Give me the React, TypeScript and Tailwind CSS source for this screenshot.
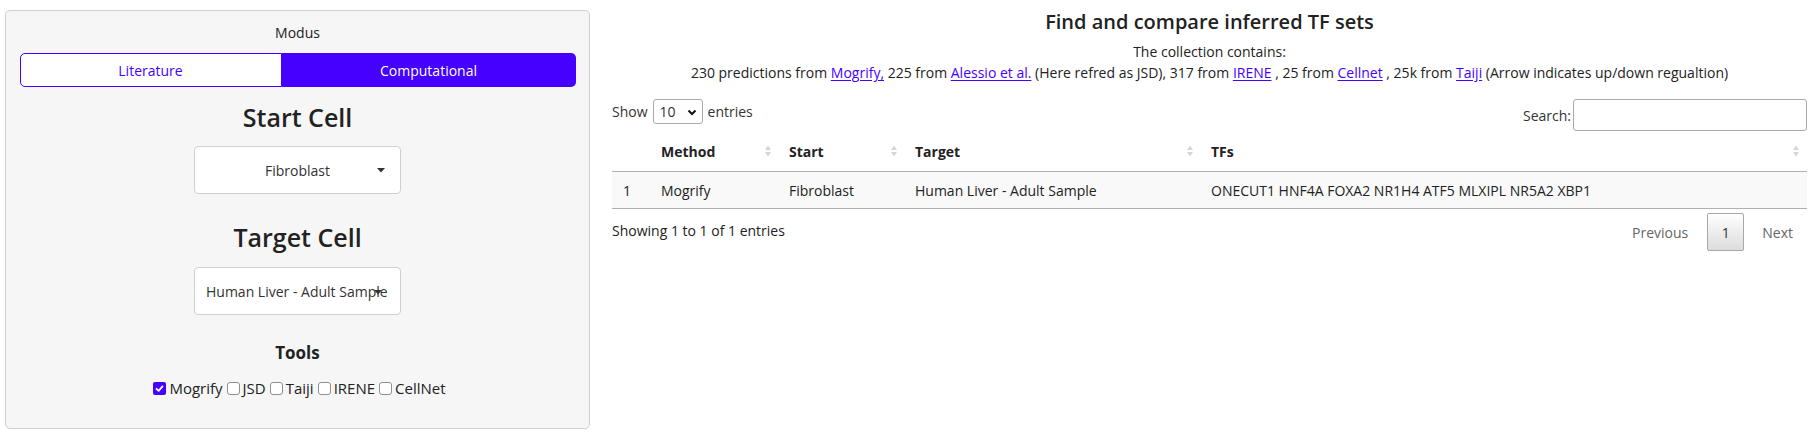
import React from "react";

function SortArrows() {
  return (
    <svg width="8" height="14" viewBox="0 0 8 14" className="absolute right-[7px] top-1/2 -translate-y-1/2">
      <polygon points="1,6 4,1.5 7,6" fill="#d6d6d6" />
      <polygon points="1,8 4,12.5 7,8" fill="#d6d6d6" />
    </svg>
  );
}

function Check({ checked, label }: { checked?: boolean; label: string }) {
  return (
    <span className="flex items-center">
      {checked ? (
        <span className="ml-[4px] mr-[3px] w-[13px] h-[13px] rounded-[2px] bg-[#4600ff] flex items-center justify-center">
          <svg width="9" height="9" viewBox="0 0 9 9">
            <path d="M1.5 4.8 L3.6 6.8 L7.5 2.4" stroke="white" strokeWidth="1.8" fill="none" strokeLinecap="round" strokeLinejoin="round" />
          </svg>
        </span>
      ) : (
        <span className="ml-[4px] mr-[3px] w-[13px] h-[13px] rounded-[3px] bg-white border border-[#8f8f8f]" />
      )}
      <span>{label}</span>
    </span>
  );
}

function A({ children }: { children: React.ReactNode }) {
  return <a className="text-[#4600ff] underline underline-offset-2">{children}</a>;
}

export default function App() {
  return (
    <div
      className="flex items-start pl-[5px] w-[1818px] h-[436px] bg-white text-[#333] text-[14px]"
      style={{ fontFamily: '"Open Sans", "Liberation Sans", sans-serif' }}
    >
      {/* Left panel */}
      <div className="mt-[10px] w-[585px] h-[419px] border border-[#cfcfcf] rounded-[5px] bg-[#f6f6f6] flex flex-col items-center">
        <div className="mt-[12px] leading-[20px] text-[#222]">Modus</div>
        <div className="mt-[10px] w-[556px] h-[34px] flex">
          <div className="w-[262px] h-full border border-[#4600ff] rounded-l-[5px] bg-white text-[#4600ff] flex items-center justify-center">
            Literature
          </div>
          <div className="flex-1 h-full rounded-r-[5px] bg-[#4600ff] text-white flex items-center justify-center">
            Computational
          </div>
        </div>
        <div className="mt-[13px] leading-[34px] text-[25px] font-semibold text-[#222]">Start Cell</div>
        <div className="relative mt-[12px] w-[207px] h-[48px] bg-white border border-[#cfcfcf] rounded-[4px] flex items-center justify-center text-[#333]">
          <span>Fibroblast</span>
          <svg width="8" height="5" viewBox="0 0 8 5" className="absolute right-[15px] top-[21px]">
            <polygon points="0,0 8,0 4,4.5" fill="#333" />
          </svg>
        </div>
        <div className="mt-[26px] leading-[34px] text-[25px] font-semibold text-[#222]">Target Cell</div>
        <div className="relative mt-[13px] w-[207px] h-[48px] bg-white border border-[#cfcfcf] rounded-[4px] flex items-center overflow-hidden text-[#333]">
          <span className="pl-[11px] whitespace-nowrap">Human Liver - Adult Sample</span>
          <svg width="8" height="5" viewBox="0 0 8 5" className="absolute right-[18px] top-[22px]">
            <polygon points="0,0 8,0 4,4.5" fill="#333" />
          </svg>
        </div>
        <div className="mt-[26px] leading-[24px] text-[17px] font-bold text-[#222]">Tools</div>
        <div className="mt-[13px] h-[20px] flex items-center text-[15px] text-[#222]">
          <Check checked label="Mogrify" />
          <Check label="JSD" />
          <Check label="Taiji" />
          <Check label="IRENE" />
          <Check label="CellNet" />
        </div>
      </div>

      {/* Right column */}
      <div className="ml-[22px] w-[1195px] flex flex-col">
        <div className="mt-[8px] leading-[28px] text-[20px] font-semibold text-center text-[#222]">
          Find and compare inferred TF sets
        </div>
        <div className="mt-[6px] leading-[20px] text-center text-[#222]">The collection contains:</div>
        <div className="mt-[1px] leading-[20px] text-center text-[#222]">
          230 predictions from <A>Mogrify,</A> 225 from <A>Alessio et al.</A> (Here refred as JSD), 317 from{" "}
          <A>IRENE</A> , 25 from <A>Cellnet</A> , 25k from <A>Taiji</A> (Arrow indicates up/down regualtion)
        </div>

        {/* controls */}
        <div className="mt-[16px] h-[32px] flex justify-between">
          <div className="h-[25px] flex items-center">
            <span>Show</span>
            <div className="relative ml-[5px] w-[50px] h-[25px] border border-[#aaa] rounded-[3px] bg-white flex items-center">
              <span className="pl-[6px]">10</span>
              <svg width="10" height="7" viewBox="0 0 10 7" className="absolute right-[5px] top-[9px]">
                <path d="M1.5 1.5 L5 5 L8.5 1.5" stroke="#111" strokeWidth="2" fill="none" />
              </svg>
            </div>
            <span className="ml-[5px]">entries</span>
          </div>
          <div className="flex items-center h-[32px]">
            <span>Search:</span>
            <div className="ml-[2px] w-[234px] h-[32px] border border-[#aaa] rounded-[3px] bg-white" />
          </div>
        </div>

        {/* table */}
        <div className="grid grid-cols-[39px_128px_126px_296px_606px] h-[41px] border-b border-[#b0b0b0] font-bold text-[#222]">
          <div className="relative flex items-center pl-[10px]"></div>
          <div className="relative flex items-center pl-[10px]">Method<SortArrows /></div>
          <div className="relative flex items-center pl-[10px]">Start<SortArrows /></div>
          <div className="relative flex items-center pl-[10px]">Target<SortArrows /></div>
          <div className="relative flex items-center pl-[10px]">TFs<SortArrows /></div>
        </div>
        <div className="grid grid-cols-[39px_128px_126px_296px_606px] h-[37px] border-b border-[#b0b0b0] bg-[#f9f9f9] text-[#222]">
          <div className="flex items-center pl-[11px]">1</div>
          <div className="flex items-center pl-[10px]">Mogrify</div>
          <div className="flex items-center pl-[10px]">Fibroblast</div>
          <div className="flex items-center pl-[10px]">Human Liver - Adult Sample</div>
          <div className="flex items-center pl-[10px]">ONECUT1 HNF4A FOXA2 NR1H4 ATF5 MLXIPL NR5A2 XBP1</div>
        </div>

        {/* footer */}
        <div className="mt-[4px] flex items-center justify-between">
          <div className="pb-[4px] text-[#222]">Showing 1 to 1 of 1 entries</div>
          <div className="flex items-center pr-[14px]">
            <span className="text-[#666]">Previous</span>
            <div className="ml-[19px] w-[37px] h-[38px] border border-[#a8a8a8] rounded-[2px] bg-gradient-to-b from-white to-[#dcdcdc] flex items-center justify-center text-[#333]">
              1
            </div>
            <span className="ml-[18px] text-[#666]">Next</span>
          </div>
        </div>
      </div>
    </div>
  );
}
